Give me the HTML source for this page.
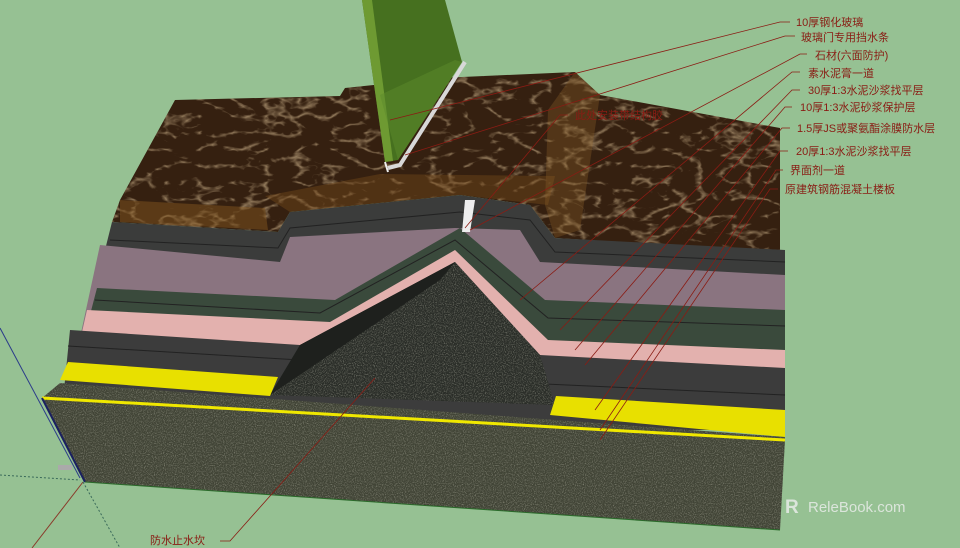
<!DOCTYPE html>
<html><head><meta charset="utf-8"><style>
html,body{margin:0;padding:0;background:#96c193;}
svg{display:block}
text{font-family:"Liberation Sans","Noto Sans CJK SC",sans-serif;font-size:11px;fill:#8a1c14}
</style></head><body>
<svg width="960" height="548" viewBox="0 0 960 548">
<defs>
<filter id="n" x="0" y="0" width="100%" height="100%">
<feTurbulence type="fractalNoise" baseFrequency="0.9" numOctaves="2" seed="3"/>
<feColorMatrix values="0 0 0 0 0.55  0 0 0 0 0.55  0 0 0 0 0.45  0 0 0 1.2 -0.55"/>
<feComposite in2="SourceGraphic" operator="in"/>
</filter>
<filter id="m" x="0" y="0" width="100%" height="100%">
<feTurbulence type="turbulence" baseFrequency="0.03 0.06" numOctaves="3" seed="7"/>
<feColorMatrix values="0 0 0 0 0.8  0 0 0 0 0.6  0 0 0 0 0.35  0 0 0 -2.5 0.55"/>
<feComposite in2="SourceGraphic" operator="in"/>
</filter>
</defs>
<rect width="960" height="548" fill="#96c193"/>
<!-- axes -->
<line x1="0" y1="328" x2="80" y2="478" stroke="#2c3c8a" stroke-width="1"/>
<line x1="83" y1="482" x2="32" y2="548" stroke="#8a3a2a" stroke-width="1"/>
<line x1="83" y1="482" x2="120" y2="548" stroke="#3a6a5a" stroke-width="1" stroke-dasharray="2,2"/>
<line x1="0" y1="475" x2="80" y2="480" stroke="#3a6a5a" stroke-width="1" stroke-dasharray="2,2"/>
<!-- marble -->
<g>
<polygon points="120,200 175,100 340,96 345,88 440,78 575,72 600,95 780,128 780,252 555,238 530,205 460,195 290,212 278,232 112,222" fill="#352010"/>
<polygon points="120,200 175,100 340,96 345,88 440,78 575,72 600,95 780,128 780,252 555,238 530,205 460,195 290,212 278,232 112,222" fill="#352010" filter="url(#m)"/>
<polygon points="120,200 265,208 268,230 120,222" fill="#8a5a22" opacity="0.45"/>
<polygon points="265,196 380,174 555,176 548,205 460,195 290,212" fill="#7a4e1c" opacity="0.4"/>
<polygon points="548,110 575,72 600,95 580,230 555,238 545,205" fill="#8a5e28" opacity="0.35"/>
</g>
<!-- layers painted top to bottom -->
<polygon points="112,222 278,232 290,212 460,195 530,205 555,238 785,250 785,430 60,430" fill="#3b3c3b"/>
<polyline points="110,240 278,248 290,228 460,212 530,220 555,252 785,262" fill="none" stroke="#222" stroke-width="1"/>
<polygon points="100,245 280,262 290,237 455,228 520,230 540,262 785,275 785,430 60,430" fill="#8a7480"/>
<polygon points="97,288 335,300 460,228 545,300 785,310 785,430 60,430" fill="#3a4a3c"/>
<polyline points="95,300 320,313 455,240 548,318 785,326" fill="none" stroke="#222" stroke-width="1"/>
<polygon points="87,310 330,322 455,250 548,340 785,350 785,430 60,430" fill="#e3b1ae"/>
<polygon points="70,330 300,345 455,262 540,355 785,368 785,430 60,430" fill="#3c3c3c"/>
<polyline points="68,346 300,360" fill="none" stroke="#222"/>
<polyline points="545,384 785,395" fill="none" stroke="#222"/>
<!-- ridge interior -->
<polygon points="270,395 300,345 455,262 540,355 555,405" fill="#2a2d28"/>
<polygon points="270,395 300,345 455,262 440,280" fill="#1e201d"/>
<polygon points="270,395 440,280 455,262 540,355 555,405" fill="#2e322b" filter="url(#n)"/>
<!-- white strip -->
<polygon points="465,200 475,200 470,232 462,232" fill="#eee"/>
<!-- yellow -->
<polygon points="68,362 278,377 270,396 60,380" fill="#e8e000"/>
<polygon points="556,396 785,410 785,437 550,415" fill="#e8e000"/>
<!-- slab -->
<polygon points="42,398 60,383 785,437 785,440 780,530 85,482" fill="#414436"/>
<polygon points="42,398 60,383 785,437 785,440 780,530 85,482" fill="#414436" filter="url(#n)"/>
<polyline points="42,398 785,440" fill="none" stroke="#f0e800" stroke-width="3"/>
<polyline points="42,398 85,482" fill="none" stroke="#1a2060" stroke-width="2"/>
<polyline points="85,482 780,530" fill="none" stroke="#2a6a2a" stroke-width="1"/>
<rect x="58" y="465" width="14" height="5" fill="#aaa"/>
<!-- glass -->
<polygon points="362,0 445,0 462,62 398,160 385,162" fill="#46701f"/>
<polygon points="362,0 372,0 393,161 385,162" fill="#6e9a32"/>
<polygon points="380,95 455,60 462,62 398,160" fill="#5c8a2c" opacity="0.5"/>
<polyline points="388,168 400,165 465,62" fill="none" stroke="#d8d8d8" stroke-width="4"/>
<polyline points="385,162 388,172" fill="none" stroke="#eee" stroke-width="2"/>
<!-- leader lines -->
<g stroke="#8a1c14" stroke-width="0.8" fill="none">
<polyline points="790,22 780,22 390,120"/>
<polyline points="795,36 785,36 405,155"/>
<polyline points="807,54 800,54 470,230"/>
<polyline points="800,72 792,72 520,300"/>
<polyline points="800,90 792,90 560,330"/>
<polyline points="792,107 785,107 575,350"/>
<polyline points="790,128 782,128 585,365"/>
<polyline points="788,151 780,151 595,410"/>
<polyline points="783,170 776,170 600,430"/>
<polyline points="778,189 770,189 600,440"/>
<polyline points="568,115 560,115 465,228"/>
<polyline points="220,541 230,541 375,378"/>
</g>
<!-- labels -->
<text x="796" y="26">10厚钢化玻璃</text>
<text x="801" y="41">玻璃门专用挡水条</text>
<text x="815" y="59">石材(六面防护)</text>
<text x="808" y="77">素水泥膏一道</text>
<text x="808" y="94">30厚1:3水泥沙浆找平层</text>
<text x="800" y="111">10厚1:3水泥砂浆保护层</text>
<text x="797" y="132">1.5厚JS或聚氨酯涂膜防水层</text>
<text x="796" y="155">20厚1:3水泥沙浆找平层</text>
<text x="790" y="174">界面剂一道</text>
<text x="785" y="193">原建筑钢筋混凝土楼板</text>
<text x="575" y="119">此处安装带结构胶</text>
<text x="150" y="544">防水止水坎</text>
<!-- watermark -->
<g opacity="0.85">
<text x="785" y="513" style="font-size:19px;fill:#e8ece8;font-weight:bold">R</text>
<text x="808" y="512" style="font-size:15px;fill:#e8ece8">ReleBook.com</text>
</g>
</svg>
</body></html>
